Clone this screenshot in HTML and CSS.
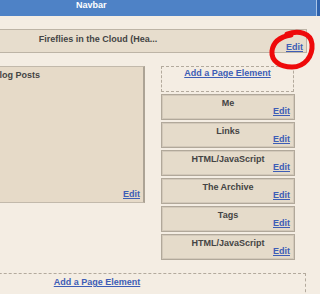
FILE: index.html
```html
<!DOCTYPE html>
<html>
<head>
<meta charset="utf-8">
<link rel="stylesheet" href="styles.css">
</head>
<body>
<div class="navbar">
  <span class="nav-title">Navbar</span>
  <span class="nav-edge"></span>
</div>
<div class="layout">
  <div class="header">
    <div class="title">Fireflies in the Cloud (Hea...</div>
    <div class="edit-row tight"><a class="edit">Edit</a></div>
  </div>
  <div class="columns">
    <div class="main-box">
      <div class="title">Blog Posts</div>
      <div class="edit-row end"><a class="edit">Edit</a></div>
    </div>
    <div class="sidebar">
      <div class="add-box"><a class="add">Add a Page Element</a></div>
      <div class="widget"><div class="title">Me</div><div class="edit-row"><a class="edit">Edit</a></div></div>
      <div class="widget"><div class="title">Links</div><div class="edit-row"><a class="edit">Edit</a></div></div>
      <div class="widget"><div class="title">HTML/JavaScript</div><div class="edit-row"><a class="edit">Edit</a></div></div>
      <div class="widget"><div class="title">The Archive</div><div class="edit-row"><a class="edit">Edit</a></div></div>
      <div class="widget"><div class="title">Tags</div><div class="edit-row"><a class="edit">Edit</a></div></div>
      <div class="widget"><div class="title">HTML/JavaScript</div><div class="edit-row"><a class="edit">Edit</a></div></div>
    </div>
  </div>
  <div class="footer"><a class="add">Add a Page Element</a></div>
</div>
<svg class="mark" width="320" height="294" viewBox="0 0 320 294">
  <path d="M287 34 C299 30, 311 33, 312 44 C313 56, 305 67, 292 67 C280 67, 271 61, 272 51 C273 43, 279 37, 291 35" fill="none" stroke="#ee0a0a" stroke-width="5" stroke-linecap="round"/>
</svg>
</body>
</html>
```
FILE: styles.css
```css
html, body {
  margin: 0;
  padding: 0;
}
body {
  width: 320px;
  height: 294px;
  overflow: hidden;
  position: relative;
  background: #f4ede3;
  font-family: "Liberation Sans", Arial, sans-serif;
  font-size: 9px;
  font-weight: bold;
  color: #444;
}
.navbar {
  height: 16px;
  background: #4e82c6;
  display: flex;
  position: relative;
}
.nav-title {
  color: #fff;
  line-height: 10px;
  padding-left: 76px;
}
.nav-edge {
  margin-left: auto;
  width: 3px;
  border-left: 1px solid #a9c4e6;
  background: #2f63ad;
}
.layout {
  margin-left: -111px;
  width: 418px;
}
.header {
  margin-top: 13px;
  height: 24px;
  box-sizing: border-box;
  border: 1px solid #bdb4a6;
  background: #e7ddcd;
  padding: 4px 3px 0;
}
.title {
  line-height: 10px;
  text-align: center;
  color: #444;
}
.edit-row {
  line-height: 10px;
  text-align: right;
  margin-top: -2px;
}
.edit-row.tight {
  margin-top: -1px;
  line-height: 9px;
}
.edit {
  color: #3d5db6;
  text-decoration: underline;
}
.columns {
  margin-top: 13px;
  display: flex;
  align-items: flex-start;
  gap: 16px;
}
.main-box {
  width: 256px;
  height: 137px;
  box-sizing: border-box;
  border: 1px solid #c2b9ab;
  border-right: 2px solid #aca395;
  background: #e6dac8;
  padding: 3px 3px 3px;
  display: flex;
  flex-direction: column;
}
.edit-row.end {
  margin-top: auto;
}
.sidebar {
  width: 134px;
  display: flex;
  flex-direction: column;
  gap: 2px;
}
.add-box {
  width: 133px;
  height: 26px;
  box-sizing: border-box;
  border: 1px dashed #b3aa9d;
  padding-top: 1px;
  text-align: center;
  line-height: 10px;
}
.add {
  color: #3d5db6;
  text-decoration: underline;
}
.widget {
  height: 26px;
  box-sizing: border-box;
  border: 1px solid #b1a89a;
  box-shadow: inset 0 0 0 1px #d3c9ba;
  background: #e5dbca;
  padding: 3px 4px 0;
}
.footer {
  margin-top: 13px;
  width: 417px;
  height: 30px;
  box-sizing: border-box;
  border-top: 1px dashed #b3aa9d;
  border-right: 1px dashed #b3aa9d;
  padding-top: 3px;
  text-align: center;
  line-height: 10px;
}
.mark {
  position: absolute;
  left: 0;
  top: 0;
  pointer-events: none;
}
```
